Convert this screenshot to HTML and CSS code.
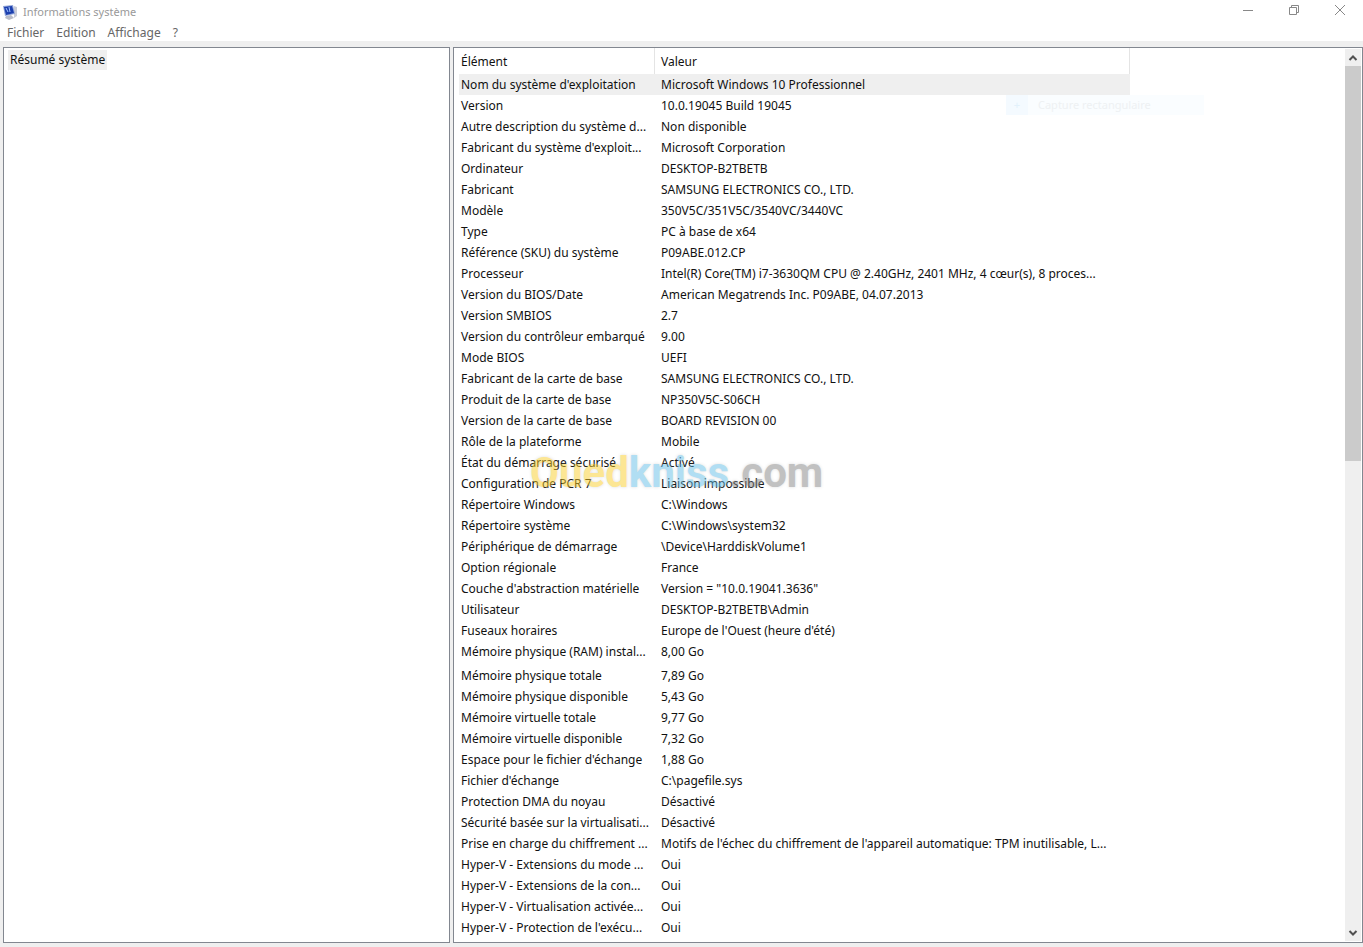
FILE: index.html
```html
<!DOCTYPE html>
<html lang="fr">
<head>
<meta charset="utf-8">
<title>Informations système</title>
<link rel="stylesheet" href="styles.css">
</head>
<body>
<header class="titlebar">
  <svg class="app-icon" width="16" height="16" viewBox="0 0 16 16" aria-hidden="true">
    <path d="M4 12l5-1 3 3-5 2-4-2z" fill="#b9bcc8"/>
    <path d="M12 2l3 1v9l-3 2z" fill="#c9ccd8"/>
    <path d="M1 2l10-1 2 9-10 2z" fill="#8fa3d8"/>
    <path d="M2 3l8-1 2 7-8 2z" fill="#1c3fae"/>
    <path d="M4 4l2 4M7 3l1 5" stroke="#9fc0ff" fill="none"/>
  </svg>
  <h1 class="title">Informations système</h1>
  <div class="window-buttons">
    <button class="window-button" aria-label="Réduire"><svg width="12" height="12" viewBox="0 0 12 12"><path d="M1 6.500h10"/></svg></button>
    <button class="window-button" aria-label="Restaurer"><svg width="12" height="12" viewBox="0 0 12 12"><path d="M1.500 3.500h7v7h-7zM3.500 3v-1.500h7v7h-2"/></svg></button>
    <button class="window-button" aria-label="Fermer"><svg width="12" height="12" viewBox="0 0 12 12"><path d="M1 1l10 10M11 1l-10 10"/></svg></button>
  </div>
</header>
<nav class="menu">
  <button>Fichier</button>
  <button>Edition</button>
  <button>Affichage</button>
  <button>?</button>
</nav>
<main class="panes">
  <section class="pane tree"><a class="tree-item" href="#resume">Résumé système</a></section>
  <section class="pane details" id="resume">
    <div class="list">
      <table class="table">
        <colgroup><col class="col-name"><col></colgroup>
        <thead><tr><th>Élément</th><th>Valeur</th></tr></thead>
        <tbody>
          <tr class="selected"><td>Nom du système d'exploitation</td><td>Microsoft Windows 10 Professionnel</td></tr>
          <tr><td>Version</td><td>10.0.19045 Build 19045</td></tr>
          <tr><td>Autre description du système d...</td><td>Non disponible</td></tr>
          <tr><td>Fabricant du système d'exploit...</td><td>Microsoft Corporation</td></tr>
          <tr><td>Ordinateur</td><td>DESKTOP-B2TBETB</td></tr>
          <tr><td>Fabricant</td><td>SAMSUNG ELECTRONICS CO., LTD.</td></tr>
          <tr><td>Modèle</td><td>350V5C/351V5C/3540VC/3440VC</td></tr>
          <tr><td>Type</td><td>PC à base de x64</td></tr>
          <tr><td>Référence (SKU) du système</td><td>P09ABE.012.CP</td></tr>
          <tr><td>Processeur</td><td>Intel(R) Core(TM) i7-3630QM CPU @ 2.40GHz, 2401 MHz, 4 cœur(s), 8 proces...</td></tr>
          <tr><td>Version du BIOS/Date</td><td>American Megatrends Inc. P09ABE, 04.07.2013</td></tr>
          <tr><td>Version SMBIOS</td><td>2.7</td></tr>
          <tr><td>Version du contrôleur embarqué</td><td>9.00</td></tr>
          <tr><td>Mode BIOS</td><td>UEFI</td></tr>
          <tr><td>Fabricant de la carte de base</td><td>SAMSUNG ELECTRONICS CO., LTD.</td></tr>
          <tr><td>Produit de la carte de base</td><td>NP350V5C-S06CH</td></tr>
          <tr><td>Version de la carte de base</td><td>BOARD REVISION 00</td></tr>
          <tr><td>Rôle de la plateforme</td><td>Mobile</td></tr>
          <tr><td>État du démarrage sécurisé</td><td>Activé</td></tr>
          <tr><td>Configuration de PCR 7</td><td>Liaison impossible</td></tr>
          <tr><td>Répertoire Windows</td><td>C:\Windows</td></tr>
          <tr><td>Répertoire système</td><td>C:\Windows\system32</td></tr>
          <tr><td>Périphérique de démarrage</td><td>\Device\HarddiskVolume1</td></tr>
          <tr><td>Option régionale</td><td>France</td></tr>
          <tr><td>Couche d'abstraction matérielle</td><td>Version = "10.0.19041.3636"</td></tr>
          <tr><td>Utilisateur</td><td>DESKTOP-B2TBETB\Admin</td></tr>
          <tr><td>Fuseaux horaires</td><td>Europe de l'Ouest (heure d'été)</td></tr>
          <tr><td>Mémoire physique (RAM) instal...</td><td>8,00 Go</td></tr>
        </tbody>
        <tbody class="memory">
          <tr><td>Mémoire physique totale</td><td>7,89 Go</td></tr>
          <tr><td>Mémoire physique disponible</td><td>5,43 Go</td></tr>
          <tr><td>Mémoire virtuelle totale</td><td>9,77 Go</td></tr>
          <tr><td>Mémoire virtuelle disponible</td><td>7,32 Go</td></tr>
          <tr><td>Espace pour le fichier d'échange</td><td>1,88 Go</td></tr>
          <tr><td>Fichier d'échange</td><td>C:\pagefile.sys</td></tr>
          <tr><td>Protection DMA du noyau</td><td>Désactivé</td></tr>
          <tr><td>Sécurité basée sur la virtualisati...</td><td>Désactivé</td></tr>
          <tr><td>Prise en charge du chiffrement ...</td><td>Motifs de l'échec du chiffrement de l'appareil automatique: TPM inutilisable, L...</td></tr>
          <tr><td>Hyper-V - Extensions du mode ...</td><td>Oui</td></tr>
          <tr><td>Hyper-V - Extensions de la con...</td><td>Oui</td></tr>
          <tr><td>Hyper-V - Virtualisation activée...</td><td>Oui</td></tr>
          <tr><td>Hyper-V - Protection de l'exécu...</td><td>Oui</td></tr>
        </tbody>
      </table>
    </div>
    <div class="scrollbar">
      <button class="scroll-button" aria-label="Défiler vers le haut"><svg width="10" height="8" viewBox="0 0 10 8"><path d="M1.500 6L5 2.500L8.500 6"/></svg></button>
      <div class="track"><div class="thumb"></div></div>
      <button class="scroll-button" aria-label="Défiler vers le bas"><svg width="10" height="8" viewBox="0 0 10 8"><path d="M1.500 2L5 5.500L8.500 2"/></svg></button>
    </div>
    <div class="watermark"><span class="yellow">Oued</span><span class="blue">kniss</span><span class="gray">.com</span></div>
    <div class="ghost"><span class="ghost-icon">+</span><span>Capture rectangulaire</span></div>
  </section>
</main>
</body>
</html>
```
FILE: styles.css
```css
* { box-sizing: border-box; }
body {
  margin: 0;
  height: 100vh;
  display: flex;
  flex-direction: column;
  background: #fff;
  color: #111;
  font: 12px/20px "Noto Sans", "Open Sans", sans-serif;
  overflow: hidden;
}
button { border: 0; padding: 0; background: none; font: inherit; color: inherit; }
.titlebar { display: flex; align-items: center; height: 23px; padding-left: 2px; color: #999; }
.title { flex: 1; margin: 0 0 0 5px; font-size: 11px; font-weight: 400; }
.window-buttons { display: flex; align-self: flex-start; }
.window-button { width: 46px; height: 20px; display: grid; place-items: center; }
.window-button svg { fill: none; stroke: #888; }
.menu { display: flex; gap: 12px; height: 18px; padding-left: 7px; color: #666; }
.panes {
  flex: 1;
  min-height: 0;
  display: grid;
  grid-template-columns: 447px 1fr;
  gap: 3px;
  padding: 6px 0 4px 3px;
  background: #efefef;
}
.pane { min-width: 0; min-height: 0; border: 1px solid #828790; background: #fff; }
.tree { padding: 2px 4px; }
.tree-item { display: inline-block; padding: 0 2px; background: #efefef; color: inherit; text-decoration: none; }
.details { position: relative; display: flex; }
.list { flex: 1; min-width: 0; padding-left: 5px; overflow: hidden; }
.table { width: 671px; table-layout: fixed; border-collapse: separate; border-spacing: 0; }
.col-name { width: 196px; }
.table th, .table td { height: 21px; padding: 0 0 0 2px; text-align: left; font-weight: 400; white-space: nowrap; }
.table th { height: 26px; padding-top: 2px; border-right: 1px solid #e4e4e4; }
.table th + th, .table td + td { padding-left: 6px; }
.selected { background: #efefef; }
.memory::before { content: ""; display: table-row; height: 3px; }
.scrollbar { width: 17px; display: flex; flex-direction: column; padding: 1px 1px 1px 0; background: #fff; }
.scroll-button { height: 17px; display: grid; place-items: center; background: #efefef; }
.scroll-button svg { fill: none; stroke: #505050; stroke-width: 2; }
.track { flex: 1; background: #efefef; }
.thumb { height: 46%; background: #cbcbcb; }
.watermark {
  position: absolute;
  left: 76px;
  top: 400px;
  font: 700 42px/50px Roboto, sans-serif;
  opacity: 0.5;
  text-shadow: 0 0 3px #bbb;
  pointer-events: none;
}
.yellow { color: #fbcf2b; }
.blue { color: #65bfe8; }
.gray { color: #858585; }
.ghost {
  position: absolute;
  left: 552px;
  top: 47px;
  width: 198px;
  display: flex;
  gap: 10px;
  background: #fafdff;
  color: #eef1f3;
  font-size: 11px;
}
.ghost-icon { width: 22px; text-align: center; background: #f4faff; color: #e2f1fb; }
```
